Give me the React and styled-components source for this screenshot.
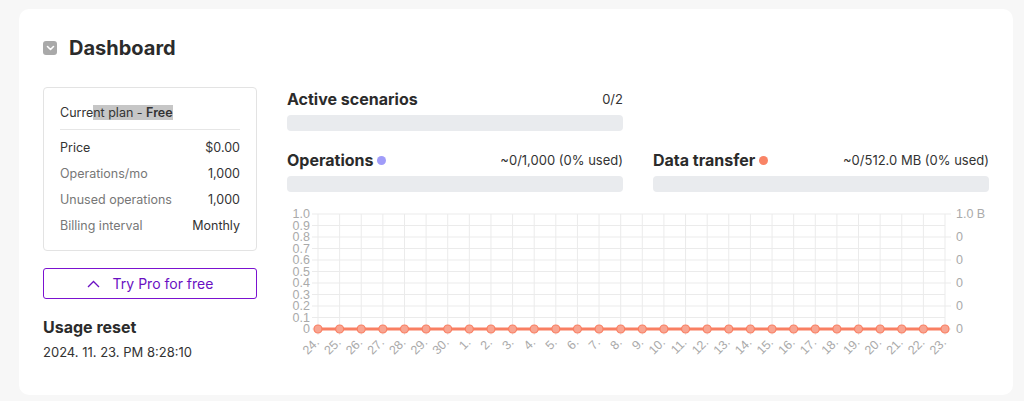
import React from 'react';
import styled, { createGlobalStyle } from 'styled-components';

const GlobalStyle = createGlobalStyle`
  body {
    margin: 0;
    background: #f7f7f7;
    font-family: Inter, "Noto Sans", sans-serif;
    color: #2e2e2e;
  }
`;

const Page = styled.div`
  padding: 9px 11px 7px 19px;
`;

const Card = styled.section`
  background: #fff;
  border-radius: 10px;
  padding: 24px;
  min-height: 385px;
  box-sizing: border-box;
`;

const Header = styled.div`
  display: flex;
  align-items: center;
  gap: 12px;
  height: 30px;
  margin-bottom: 24px;
`;

const Toggle = styled.span`
  width: 14px;
  height: 14px;
  border-radius: 3px;
  background: #a9a9a9;
  display: flex;
  align-items: center;
  justify-content: center;
`;

const Title = styled.h1`
  margin: 0;
  font-size: 20px;
  font-weight: 700;
  color: #2b2b2b;
`;

const Body = styled.div`
  display: grid;
  grid-template-columns: 214px 1fr;
  gap: 30px;
`;

const Side = styled.div`
  display: flex;
  flex-direction: column;
`;

const PlanBox = styled.div`
  border: 1px solid #e3e3e3;
  border-radius: 4px;
  padding: 16px 16px 12px;
`;

const PlanTitle = styled.div`
  font-size: 12.5px;
  line-height: 18px;
  padding-bottom: 7px;
  border-bottom: 1px solid #e6e6e6;
  margin-bottom: 4px;
  color: #333;
  b { font-weight: 600; }
`;

const Selected = styled.span`
  background: #c6c6c6;
`;

const PlanRow = styled.div`
  display: flex;
  justify-content: space-between;
  align-items: center;
  height: 26px;
  font-size: 12.5px;
  color: ${p => (p.$muted ? '#777' : '#333')};
  span:last-child { color: #333; }
`;

const ProButton = styled.button`
  margin-top: 17px;
  height: 31px;
  border: 1px solid #7b12d0;
  border-radius: 3px;
  background: #fff;
  color: #6a0fc2;
  font-family: inherit;
  font-size: 14px;
  display: flex;
  align-items: center;
  justify-content: center;
  gap: 13px;
  padding: 0;
`;

const SubTitle = styled.h2`
  margin: 17px 0 0;
  font-size: 16px;
  font-weight: 700;
  line-height: 22px;
  color: #2b2b2b;
`;

const DateText = styled.div`
  margin-top: 5px;
  font-size: 13px;
  line-height: 18px;
  color: #333;
`;

const Main = styled.div`
  display: flex;
  flex-direction: column;
`;

const MetricGrid = styled.div`
  display: grid;
  grid-template-columns: 1fr 1fr;
  column-gap: 30px;
  row-gap: 17px;
`;

const Metric = styled.div`
  display: flex;
  flex-direction: column;
  gap: 5px;
`;

const MetricHead = styled.div`
  display: flex;
  justify-content: space-between;
  align-items: center;
  height: 22px;
  margin-top: 1px;
`;

const MetricName = styled.span`
  display: flex;
  align-items: center;
  gap: 4px;
  font-size: 16px;
  font-weight: 700;
  color: #2b2b2b;
`;

const Dot = styled.span`
  width: 9px;
  height: 9px;
  border-radius: 50%;
  background: ${p => p.$color};
`;

const MetricValue = styled.span`
  font-size: 13px;
  color: #333;
`;

const Bar = styled.div`
  height: 16px;
  border-radius: 4px;
  background: #e9ebee;
`;

const Chart = styled.svg`
  display: block;
  margin-top: 14px;
  font-family: "Liberation Sans", Arial, sans-serif;
  font-size: 12.5px;
`;

const days = [24, 25, 26, 27, 28, 29, 30, ...Array.from({ length: 23 }, (_, i) => i + 1)];
const X0 = 31;
const X1 = 658;
const Y0 = 8;
const Y1 = 123;
const step = (X1 - X0) / (days.length - 1);

function UsageChart() {
  const leftTicks = Array.from({ length: 11 }, (_, k) => ({
    y: Y0 + k * ((Y1 - Y0) / 10),
    label: ((10 - k) / 10).toFixed(1).replace(/^0\.0$/, '0'),
  }));
  const rightTicks = Array.from({ length: 6 }, (_, k) => ({
    y: Y0 + k * ((Y1 - Y0) / 5),
    label: k === 0 ? '1.0 B' : '0',
  }));
  return (
    <Chart width="702" height="165" viewBox="0 0 702 165">
      {leftTicks.map(t => (
        <g key={`h${t.y}`}>
          <line x1={25} x2={X1} y1={t.y} y2={t.y} stroke="#ebebeb" strokeWidth="1" />
          <text x={23} y={t.y + 4.4} textAnchor="end" fill="#aaa">{t.label}</text>
        </g>
      ))}
      {rightTicks.map(t => (
        <g key={`r${t.y}`}>
          <line x1={X1} x2={664} y1={t.y} y2={t.y} stroke="#ebebeb" strokeWidth="1" />
          <text x={669} y={t.y + 4.4} fill="#aaa">{t.label}</text>
        </g>
      ))}
      {days.map((d, i) => {
        const x = X0 + i * step;
        return (
          <g key={`v${i}`}>
            <line x1={x} x2={x} y1={Y0} y2={Y1 + 6} stroke="#ebebeb" strokeWidth="1" />
            <text
              x={x + 2}
              y={Y1 + 14}
              textAnchor="end"
              fill="#aaa"
              transform={`rotate(-45 ${x + 2} ${Y1 + 14})`}
            >
              {d}.
            </text>
          </g>
        );
      })}
      <line x1={X0} x2={X1} y1={Y1} y2={Y1} stroke="#f97f62" strokeWidth="3" />
      {days.map((d, i) => (
        <circle
          key={`p${i}`}
          cx={X0 + i * step}
          cy={Y1}
          r="4"
          fill="#f8a592"
          stroke="#f97f62"
          strokeWidth="1.2"
        />
      ))}
    </Chart>
  );
}

export default function App() {
  return (
    <>
      <GlobalStyle />
      <Page>
        <Card>
          <Header>
            <Toggle>
              <svg width="9" height="6" viewBox="0 0 9 6">
                <path d="M1.5 1.5 L4.5 4.5 L7.5 1.5" fill="none" stroke="#fff" strokeWidth="1.6" strokeLinecap="round" strokeLinejoin="round" />
              </svg>
            </Toggle>
            <Title>Dashboard</Title>
          </Header>
          <Body>
            <Side>
              <PlanBox>
                <PlanTitle>
                  Curre<Selected>nt plan - <b>Free</b></Selected>
                </PlanTitle>
                <PlanRow><span>Price</span><span>$0.00</span></PlanRow>
                <PlanRow $muted><span>Operations/mo</span><span>1,000</span></PlanRow>
                <PlanRow $muted><span>Unused operations</span><span>1,000</span></PlanRow>
                <PlanRow $muted><span>Billing interval</span><span>Monthly</span></PlanRow>
              </PlanBox>
              <ProButton>
                <svg width="13" height="8" viewBox="0 0 13 8">
                  <path d="M1 7 L6.5 1.5 L12 7" fill="none" stroke="#6a0fc2" strokeWidth="1.3" />
                </svg>
                Try Pro for free
              </ProButton>
              <SubTitle>Usage reset</SubTitle>
              <DateText>2024. 11. 23. PM 8:28:10</DateText>
            </Side>
            <Main>
              <MetricGrid>
                <Metric>
                  <MetricHead>
                    <MetricName>Active scenarios</MetricName>
                    <MetricValue>0/2</MetricValue>
                  </MetricHead>
                  <Bar />
                </Metric>
                <div />
                <Metric>
                  <MetricHead>
                    <MetricName>Operations <Dot $color="#a09cf9" /></MetricName>
                    <MetricValue>~0/1,000 (0% used)</MetricValue>
                  </MetricHead>
                  <Bar />
                </Metric>
                <Metric>
                  <MetricHead>
                    <MetricName>Data transfer <Dot $color="#f98466" /></MetricName>
                    <MetricValue>~0/512.0 MB (0% used)</MetricValue>
                  </MetricHead>
                  <Bar />
                </Metric>
              </MetricGrid>
              <UsageChart />
            </Main>
          </Body>
        </Card>
      </Page>
    </>
  );
}
